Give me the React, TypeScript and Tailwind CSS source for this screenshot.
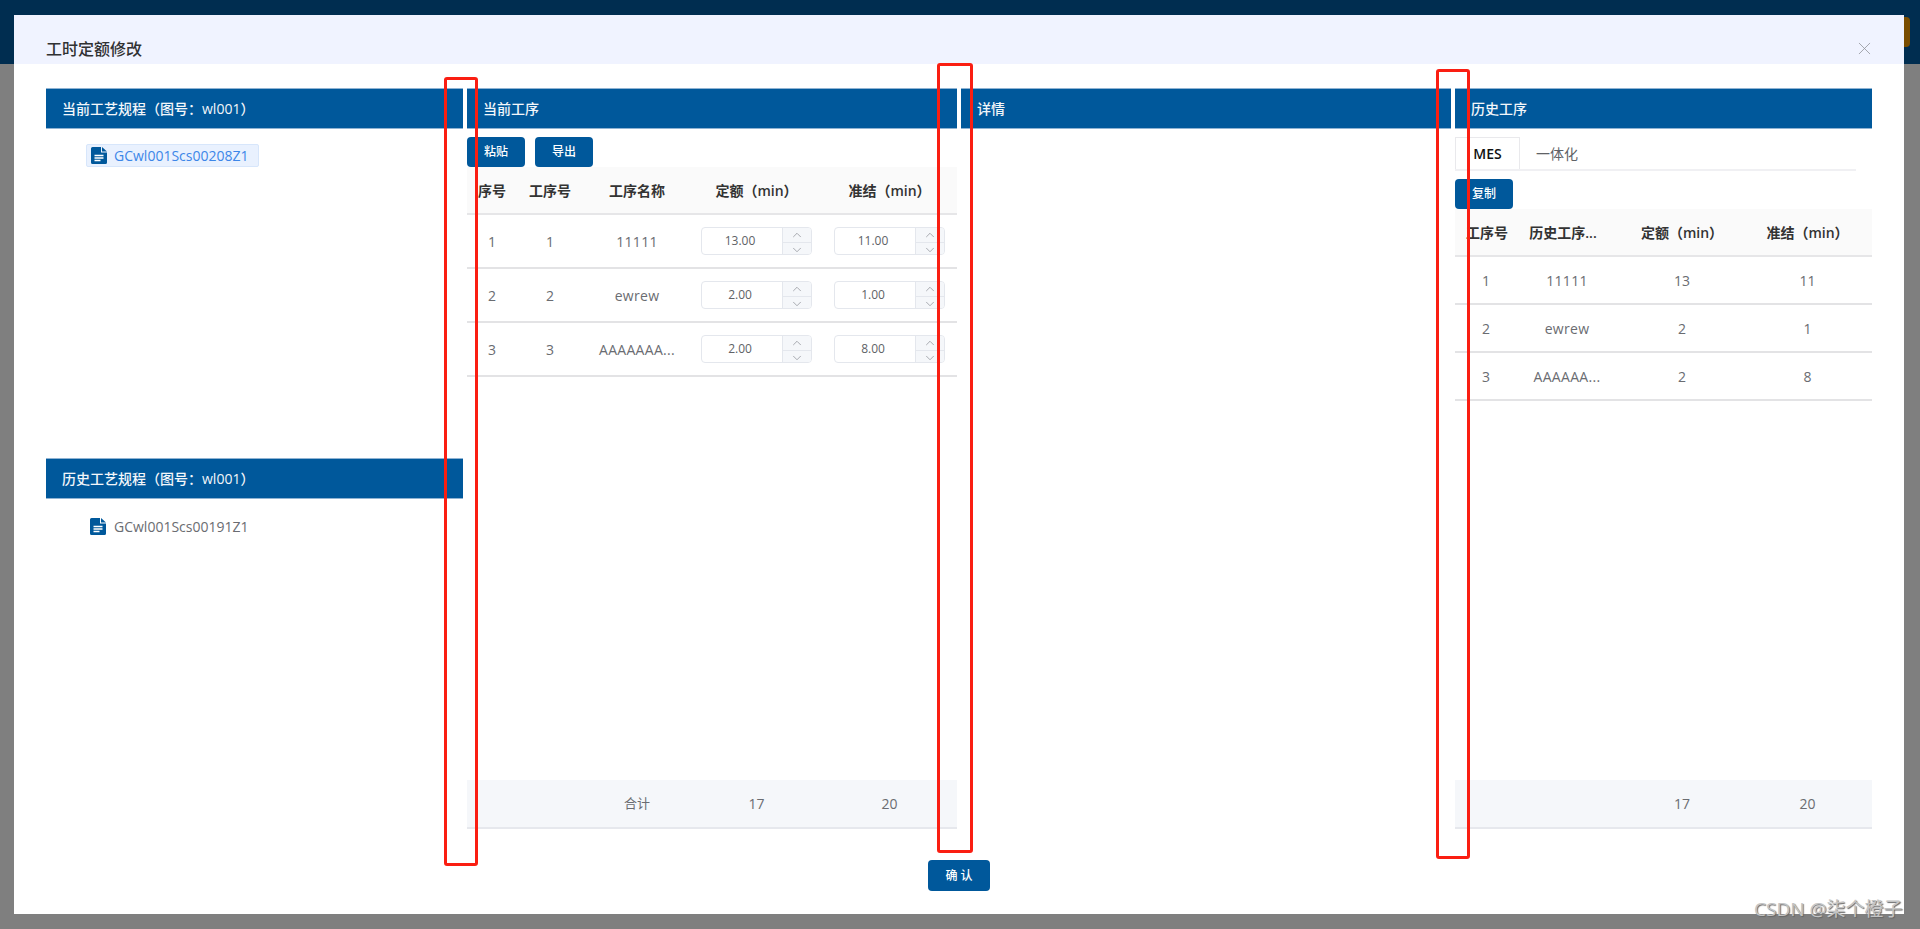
import { ChevronDown, ChevronUp, X } from "lucide-react";

const font = "font-['Open_Sans','Noto_Sans_CJK_SC',sans-serif]";

function FileIcon() {
    return (
        <svg width="16" height="17" viewBox="0 0 16 17" className="shrink-0">
            <path d="M1.5 0H10v5.5h6V15.5A1.5 1.5 0 0 1 14.500 17h-13A1.500 1.500 0 0 1 0 15.500v-14A1.500 1.500 0 0 1 1.500 0z" fill="#00589b" />
            <path d="M11 0l5 4.500h-5z" fill="#00589b" />
            <path d="M3.500 8.500h9M3.500 11h9M3.500 13.500h6" stroke="#fff" strokeWidth="1.300" />
        </svg>
    );
}

function PanelTitle({ children }: { children: React.ReactNode }) {
    return (
        <div className="flex h-[41px] items-center border-y border-[#8fb3d3] bg-[#00589b] pl-4 text-[14px] font-medium text-[#f2f6fa]">
            {children}
        </div>
    );
}

function BlueButton({ children, className = "" }: { children: React.ReactNode; className?: string }) {
    return (
        <button className={`flex h-[30px] items-center justify-center rounded-[4px] bg-[#00589b] text-[12px] font-medium text-white ${className}`}>
            {children}
        </button>
    );
}

function NumberInput({ value }: { value: string }) {
    return (
        <div className="flex h-[28px] w-[111px] overflow-hidden rounded-[4px] border border-[#e4e7ed] bg-white">
            <div className="flex flex-1 items-center justify-center pr-1 text-[12px] text-[#606266]">{value}</div>
            <div className="flex w-[29px] flex-col border-l border-[#e4e7ed] bg-[#f5f7fa] text-[#909399]">
                <div className="flex flex-1 items-center justify-center border-b border-[#e4e7ed]">
                    <ChevronUp size={14} strokeWidth={1.3} />
                </div>
                <div className="flex flex-1 items-center justify-center">
                    <ChevronDown size={14} strokeWidth={1.3} />
                </div>
            </div>
        </div>
    );
}

const currentRows = [
    { no: "1", step: "1", name: "11111", quota: "13.00", prep: "11.00" },
    { no: "2", step: "2", name: "ewrew", quota: "2.00", prep: "1.00" },
    { no: "3", step: "3", name: "AAAAAAA...", quota: "2.00", prep: "8.00" },
];

const historyRows = [
    { step: "1", name: "11111", quota: "13", prep: "11" },
    { step: "2", name: "ewrew", quota: "2", prep: "1" },
    { step: "3", name: "AAAAAA...", quota: "2", prep: "8" },
];

function CurrentTable() {
    const grid = "grid grid-cols-[50px_66px_108px_131px_135px]";
    return (
        <div>
            <div className={`${grid} h-[48px] items-center border-b-2 border-[#e6e6e8] bg-[#fafafa] text-center text-[14px] font-semibold text-[#333]`}>
                <div>序号</div>
                <div>工序号</div>
                <div>工序名称</div>
                <div>定额（min）</div>
                <div>准结（min）</div>
            </div>
            {currentRows.map((row) => (
                <div key={row.no} className={`${grid} h-[54px] items-center border-b-2 border-[#e3e3e5] text-center text-[14px] text-[#6a6c71]`}>
                    <div>{row.no}</div>
                    <div>{row.step}</div>
                    <div className="tracking-[0.3px]">{row.name}</div>
                    <div className="flex justify-center"><NumberInput value={row.quota} /></div>
                    <div className="flex justify-center"><NumberInput value={row.prep} /></div>
                </div>
            ))}
        </div>
    );
}

function HistoryTable() {
    const grid = "grid grid-cols-[62px_100px_130px_121px]";
    return (
        <div>
            <div className={`${grid} h-[48px] items-center border-b-2 border-[#e6e6e8] bg-[#fafafa] text-center text-[14px] font-semibold text-[#333]`}>
                <div className="pl-[2px]">工序号</div>
                <div className="pr-2">历史工序...</div>
                <div>定额（min）</div>
                <div>准结（min）</div>
            </div>
            {historyRows.map((row) => (
                <div key={row.step} className={`${grid} h-[48px] items-center border-b-2 border-[#e3e3e5] text-center text-[14px] text-[#6a6c71]`}>
                    <div>{row.step}</div>
                    <div className="tracking-[0.3px]">{row.name}</div>
                    <div>{row.quota}</div>
                    <div>{row.prep}</div>
                </div>
            ))}
        </div>
    );
}

export default function App() {
    return (
        <div className={`relative h-[929px] overflow-hidden bg-[#7f7f7f] ${font}`}>
            {/* Page behind the dialog */}
            <div className="flex h-16 justify-end bg-[#002d50] pr-[10px] pt-[17px]">
                <div className="h-[30px] w-[60px] rounded-[4px] bg-[#7a4d00]" />
            </div>

            {/* Dialog */}
            <div className="absolute left-[14px] top-[15px] flex h-[899px] w-[1890px] flex-col bg-white">
                <div className="flex h-[49px] shrink-0 items-center justify-between bg-[#f0f3ff] pl-8 pr-[29px] pt-[18px]">
                    <h2 className="text-[16px] font-medium leading-6 text-[#303133]">工时定额修改</h2>
                    <X size={21} strokeWidth={0.9} className="text-[#909399]" />
                </div>

                <div className="flex h-[765px] shrink-0 gap-1 pl-8 pt-6">
                    {/* Process lists */}
                    <div className="flex w-[417px] flex-col">
                        <div className="h-[370px]">
                            <PanelTitle>当前工艺规程（图号：wl001）</PanelTitle>
                            <div className="ml-[40px] mt-[15px] flex h-[23px] w-[173px] items-center gap-[7px] rounded-[2px] border border-[#d7e6fb] bg-[#e9f1fe] pl-[4px] text-[14px] text-[#3c86e8]">
                                <FileIcon />
                                <span>GCwl001Scs00208Z1</span>
                            </div>
                        </div>
                        <div>
                            <PanelTitle>历史工艺规程（图号：wl001）</PanelTitle>
                            <div className="ml-[44px] mt-[17px] flex items-center gap-2 text-[14px] text-[#6a6c71]">
                                <FileIcon />
                                <span>GCwl001Scs00191Z1</span>
                            </div>
                        </div>
                    </div>

                    {/* Current steps */}
                    <div className="flex w-[490px] flex-col">
                        <PanelTitle>当前工序</PanelTitle>
                        <div className="mt-2 flex gap-[10px]">
                            <BlueButton className="w-[58px]">粘贴</BlueButton>
                            <BlueButton className="w-[58px]">导出</BlueButton>
                        </div>
                        <CurrentTable />
                        <div className="mt-auto grid h-[49px] grid-cols-[50px_66px_108px_131px_135px] items-center border-b-2 border-[#e6e8ed] bg-[#f5f7fa] text-center text-[14px] text-[#6a6c71]">
                            <div />
                            <div />
                            <div className="text-[13px]">合计</div>
                            <div>17</div>
                            <div>20</div>
                        </div>
                    </div>

                    {/* Details */}
                    <div className="w-[490px]">
                        <PanelTitle>详情</PanelTitle>
                    </div>

                    {/* History steps */}
                    <div className="flex w-[417px] flex-col">
                        <PanelTitle>历史工序</PanelTitle>
                        <div className="mr-4 mt-2 flex h-[34px] border-b-2 border-[#f0f0f3] text-[14px]">
                            <div className="flex w-[65px] items-center justify-center border-x border-t border-[#e9e9ec] font-semibold text-[#111]">MES</div>
                            <div className="flex w-[74px] items-center justify-center text-[#606266]">一体化</div>
                        </div>
                        <div className="mt-2">
                            <BlueButton className="w-[58px]">复制</BlueButton>
                        </div>
                        <HistoryTable />
                        <div className="mt-auto grid h-[49px] grid-cols-[62px_100px_130px_121px] items-center border-b-2 border-[#e6e8ed] bg-[#f5f7fa] text-center text-[14px] text-[#6a6c71]">
                            <div />
                            <div />
                            <div>17</div>
                            <div>20</div>
                        </div>
                    </div>
                </div>

                <div className="flex justify-center pt-[31px]">
                    <BlueButton className="h-[31px] w-[62px] whitespace-pre">确 认</BlueButton>
                </div>
            </div>

            {/* Red annotation boxes drawn on the screenshot */}
            <div className="absolute left-[444px] top-[77px] h-[789px] w-[34px] rounded-[3px] border-[3px] border-[#fa1e12]" />
            <div className="absolute left-[937px] top-[63px] h-[790px] w-[36px] rounded-[3px] border-[3px] border-[#fa1e12]" />
            <div className="absolute left-[1436px] top-[69px] h-[790px] w-[34px] rounded-[3px] border-[3px] border-[#fa1e12]" />

            {/* Watermark */}
            <div className="absolute left-[1754px] top-[897px] whitespace-nowrap text-[19px] leading-6 text-[#c4c4c4] [text-shadow:1px_1px_1px_#666]">
                CSDN @柒个橙子
            </div>
        </div>
    );
}
